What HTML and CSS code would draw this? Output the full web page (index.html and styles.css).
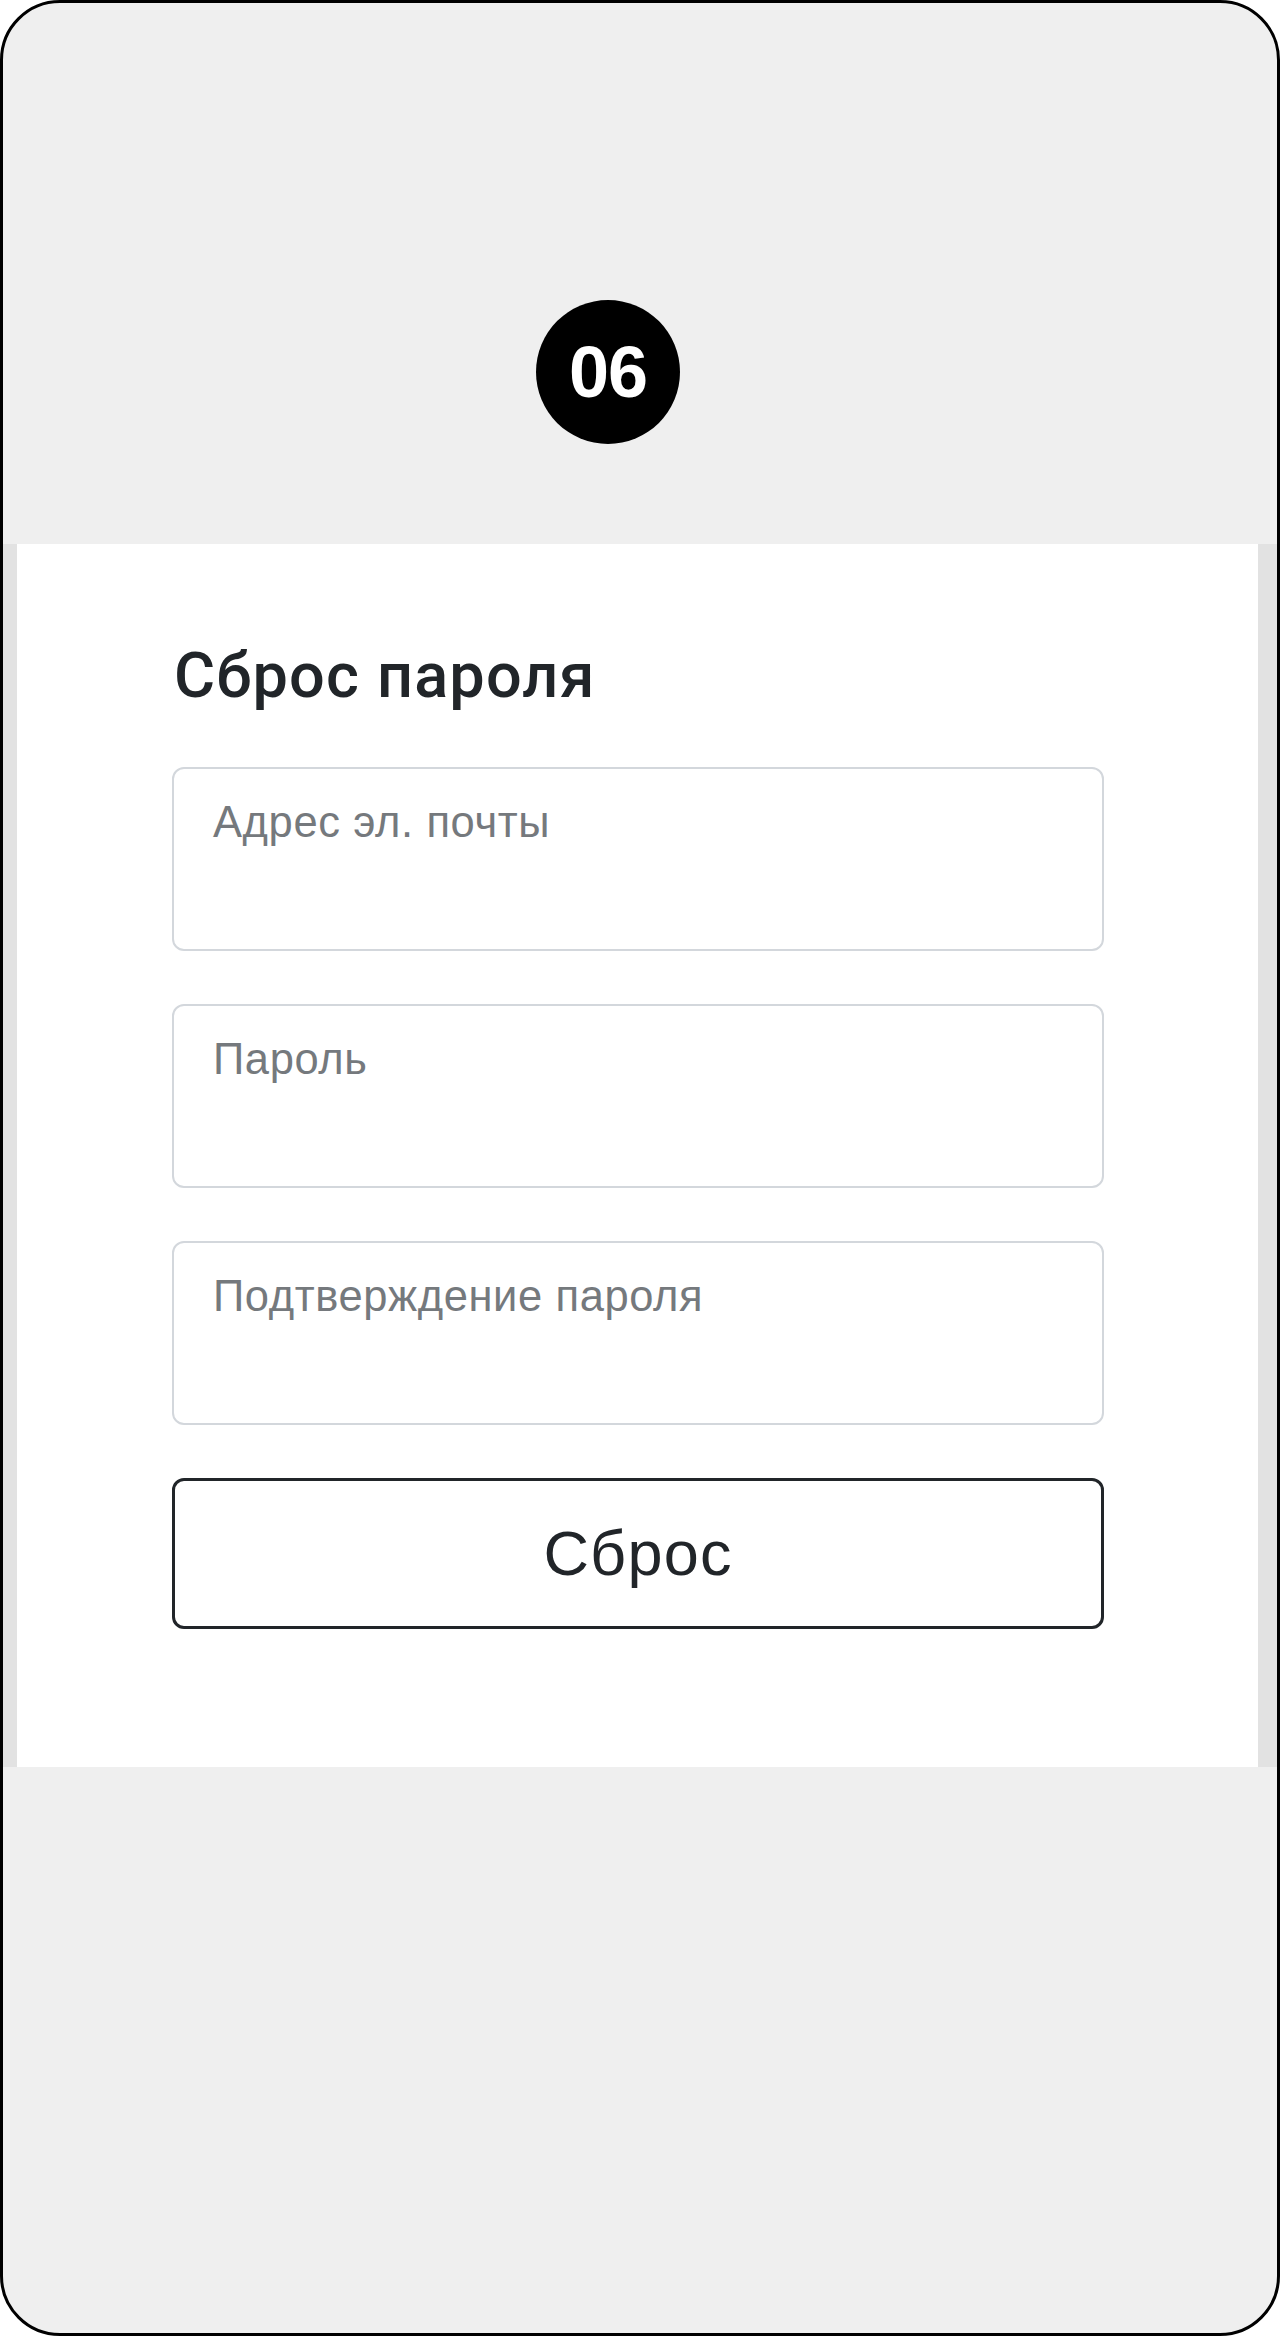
FILE: index.html
```html
<!DOCTYPE html>
<html lang="ru">
<head>
<meta charset="utf-8">
<title>Сброс пароля</title>
<link rel="stylesheet" href="styles.css">
</head>
<body>
<div class="frame">
  <header class="top">
    <div class="badge">06</div>
  </header>
  <section class="panel">
    <div class="card">
      <h1 class="title">Сброс пароля</h1>
      <form class="form">
        <div class="field"><span class="ph">Адрес эл. почты</span></div>
        <div class="field"><span class="ph">Пароль</span></div>
        <div class="field"><span class="ph">Подтверждение пароля</span></div>
        <button type="button" class="btn">Сброс</button>
      </form>
    </div>
  </section>
</div>
</body>
</html>
```

FILE: styles.css
```css
* { box-sizing: border-box; }
html, body { margin: 0; padding: 0; }
body {
  width: 1280px;
  height: 2336px;
  background: #ffffff;
  font-family: "Liberation Sans", Arial, sans-serif;
}
.frame {
  width: 1280px;
  height: 2336px;
  border: 3px solid #000;
  border-radius: 60px;
  background: #efefef;
  overflow: hidden;
  display: flex;
  flex-direction: column;
}
.top {
  height: 541px;
  padding-top: 297px;
  padding-left: 533px;
  flex: none;
}
.badge {
  width: 144px;
  height: 144px;
  border-radius: 50%;
  background: #000;
  color: #fff;
  font-weight: 700;
  font-size: 72px;
  letter-spacing: -1px;
  display: flex;
  align-items: center;
  justify-content: center;
  line-height: 1;
}
.panel {
  background: #e2e2e2;
  padding: 0 19px 0 14px;
  flex: none;
}
.card {
  background: #fff;
  height: 1223px;
  padding: 95px 154px 0 155px;
}
.title {
  margin: 0 0 54px 2px;
  font-family: Roboto, "Liberation Sans", sans-serif;
  font-size: 63px;
  line-height: 74px;
  font-weight: 500;
  letter-spacing: 1.2px;
  color: #212529;
}
.form {
  display: flex;
  flex-direction: column;
  gap: 53px;
}
.field {
  height: 184px;
  border: 2px solid #d3d7dc;
  border-radius: 12px;
  padding: 27px 0 0 39px;
  background: #fff;
}
.ph {
  display: block;
  font-size: 43.5px;
  line-height: 52px;
  letter-spacing: 0.6px;
  color: #75797d;
}
.btn {
  height: 151px;
  width: 100%;
  border: 3px solid #212529;
  border-radius: 12px;
  background: #fff;
  color: #212529;
  font-family: "Liberation Sans", Arial, sans-serif;
  font-size: 63px;
  letter-spacing: 1.2px;
  line-height: 1;
  display: flex;
  align-items: center;
  justify-content: center;
  padding: 0;
}
```
